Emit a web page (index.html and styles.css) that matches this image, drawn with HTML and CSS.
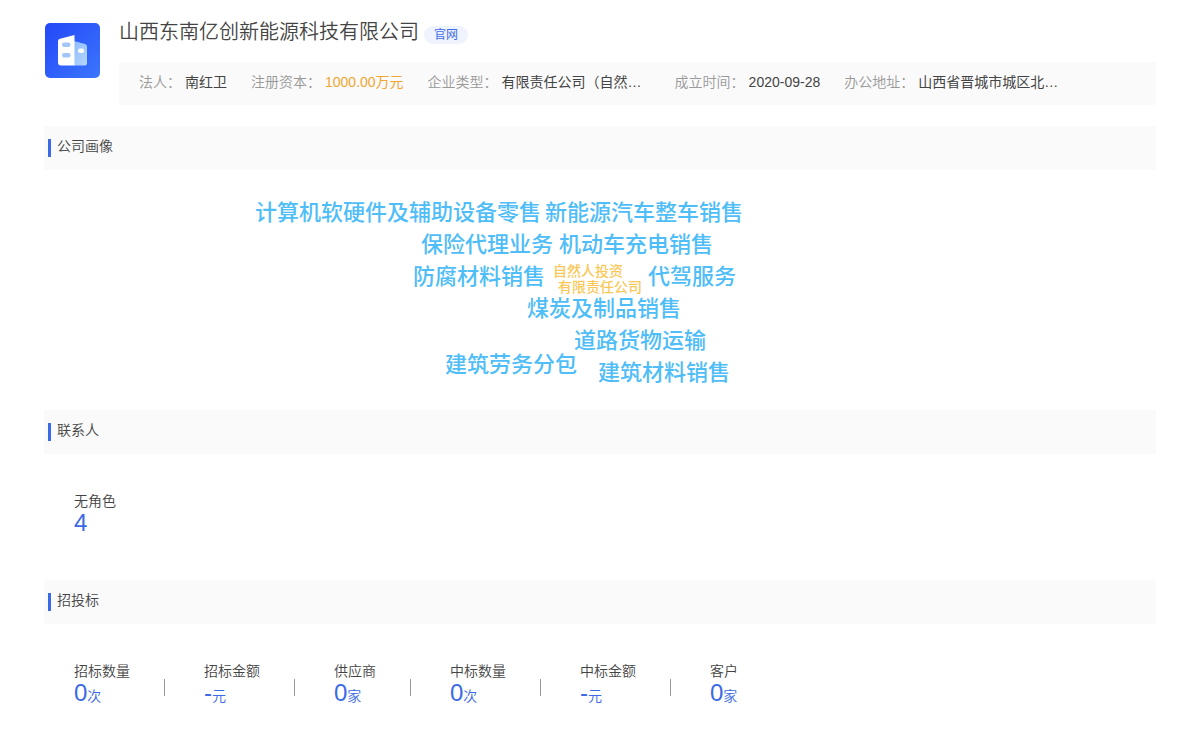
FILE: index.html
```html
<!DOCTYPE html>
<html lang="zh-CN">
<head>
<meta charset="utf-8">
<title>山西东南亿创新能源科技有限公司</title>
<link rel="stylesheet" href="styles.css">
</head>
<body>
<main class="page">
  <header class="company">
    <svg class="logo" viewBox="0 0 55 55" aria-hidden="true">
      <defs>
        <linearGradient id="bg" x1="0" y1="0" x2="1" y2="1"><stop offset="0" stop-color="#2447f8"/><stop offset="1" stop-color="#3b76fc"/></linearGradient>
        <linearGradient id="side" x1="0" y1="0" x2="1" y2="1"><stop offset="0" stop-color="#8dbcfb"/><stop offset="1" stop-color="#b5d6fd"/></linearGradient>
      </defs>
      <rect width="55" height="55" rx="5" fill="url(#bg)"/>
      <path d="M29 18L40 21Q42 21.600 42 23.500V40Q42 42.500 39.500 42.500H29Z" fill="url(#side)"/>
      <path d="M29.500 12V42.500H16Q13 42.500 13 39.500V18Q13 16.200 15 15.700Z" fill="#fff"/>
      <rect x="17" y="19.500" width="8.500" height="4.500" rx="2.200" fill="#a3c5fa"/>
      <rect x="17" y="30" width="8.500" height="4.500" rx="2.200" fill="#a3c5fa"/>
      <rect x="33" y="25.500" width="6" height="4.500" rx="2" fill="#fff"/>
    </svg>
    <div class="company-body">
      <div class="title-row">
        <h1 class="company-name">山西东南亿创新能源科技有限公司</h1>
        <a class="site-tag" href="#">官网</a>
      </div>
      <dl class="info">
        <div class="info-item"><dt>法人：</dt><dd>南红卫</dd></div>
        <div class="info-item"><dt>注册资本：</dt><dd class="capital">1000.00万元</dd></div>
        <div class="info-item"><dt>企业类型：</dt><dd class="wide">有限责任公司（自然…</dd></div>
        <div class="info-item"><dt>成立时间：</dt><dd>2020-09-28</dd></div>
        <div class="info-item"><dt>办公地址：</dt><dd class="wide">山西省晋城市城区北…</dd></div>
      </dl>
    </div>
  </header>

  <section>
    <h2 class="section-title">公司画像</h2>
    <div class="cloud">
      <span class="word w1">计算机软硬件及辅助设备零售</span>
      <span class="word w2">新能源汽车整车销售</span>
      <span class="word w3">保险代理业务</span>
      <span class="word w4">机动车充电销售</span>
      <span class="word w5">防腐材料销售</span>
      <span class="word small w6">自然人投资</span>
      <span class="word small w7">有限责任公司</span>
      <span class="word w8">代驾服务</span>
      <span class="word w9">煤炭及制品销售</span>
      <span class="word w10">道路货物运输</span>
      <span class="word w11">建筑劳务分包</span>
      <span class="word w12">建筑材料销售</span>
    </div>
  </section>

  <section>
    <h2 class="section-title">联系人</h2>
    <dl class="stats">
      <div class="stat"><dt>无角色</dt><dd>4</dd></div>
    </dl>
  </section>

  <section>
    <h2 class="section-title">招投标</h2>
    <dl class="stats">
      <div class="stat"><dt>招标数量</dt><dd>0<small>次</small></dd></div>
      <div class="stat"><dt>招标金额</dt><dd>-<small>元</small></dd></div>
      <div class="stat"><dt>供应商</dt><dd>0<small>家</small></dd></div>
      <div class="stat"><dt>中标数量</dt><dd>0<small>次</small></dd></div>
      <div class="stat"><dt>中标金额</dt><dd>-<small>元</small></dd></div>
      <div class="stat"><dt>客户</dt><dd>0<small>家</small></dd></div>
    </dl>
  </section>
</main>
</body>
</html>
```
FILE: styles.css
```css
* { box-sizing: border-box; }
body {
  margin: 0;
  background: #fff;
  color: #444;
  font: 14px/20px "Liberation Sans", "Noto Sans CJK SC", sans-serif;
}
h1, h2, dl, dd { margin: 0; font-weight: 350; }

.page { padding: 16px 44px 0; }

.company { display: flex; gap: 19px; margin-bottom: 21px; }
.logo { flex: none; width: 55px; height: 55px; margin: 7px 0 0 1px; }
.company-body { flex: 1; min-width: 0; }
.title-row { display: flex; align-items: center; gap: 5px; height: 32px; margin-bottom: 14px; }
.company-name { font-size: 20px; line-height: 30px; }
.site-tag {
  margin-top: 6px;
  padding: 0 10px;
  border-radius: 9px;
  background: #eef3fe;
  color: #3f6ce8;
  font-size: 12px;
  line-height: 18px;
  text-decoration: none;
}
.info {
  display: flex;
  gap: 24px;
  min-height: 43px;
  padding: 10px 20px;
  background: #fafafa;
}
.info-item { display: flex; gap: 4px; white-space: nowrap; }
.info dt { color: #999; font-weight: 350; }
.info dd { font-weight: 400; color: #444; }
.info .capital { color: #f0a630; }
.info .wide { width: 149px; }

.section-title {
  display: flex;
  align-items: center;
  gap: 6px;
  height: 44px;
  padding: 0 4px 4px;
  background: #fafafa;
  font-size: 14px;
  color: #444;
}
.section-title::before {
  content: "";
  width: 3px;
  height: 18px;
  margin-top: 4px;
  background: #3a6ae6;
}

.cloud { position: relative; height: 240px; }
.word {
  position: absolute;
  color: #4fbdf8;
  font-size: 22px;
  line-height: 32px;
  font-weight: 500;
  white-space: nowrap;
}
.small { color: #fac858; font-size: 14px; line-height: 16px; }
.w1 { left: 211px; top: 27px; }
.w2 { left: 501px; top: 27px; }
.w3 { left: 377px; top: 59px; }
.w4 { left: 515px; top: 59px; }
.w5 { left: 369px; top: 91px; }
.w6 { left: 509px; top: 93px; }
.w7 { left: 514px; top: 109px; }
.w8 { left: 604px; top: 91px; }
.w9 { left: 483px; top: 123px; }
.w10 { left: 530px; top: 155px; }
.w11 { left: 401px; top: 179px; }
.w12 { left: 554px; top: 187px; }

.stats { display: flex; height: 126px; padding: 37px 30px 0; }
.stat { display: flex; flex-direction: column; position: relative; }
.stat + .stat { margin-left: 74px; }
.stat + .stat::before {
  content: "";
  position: absolute;
  left: -40px;
  top: 18px;
  width: 1px;
  height: 17px;
  background: #999;
}
.stat dt { line-height: 20px; color: #444; font-weight: 350; }
.stat dd { color: #3a6ae6; font-size: 24px; line-height: 24px; white-space: nowrap; }
.stat small { font-size: 14px; }
```
